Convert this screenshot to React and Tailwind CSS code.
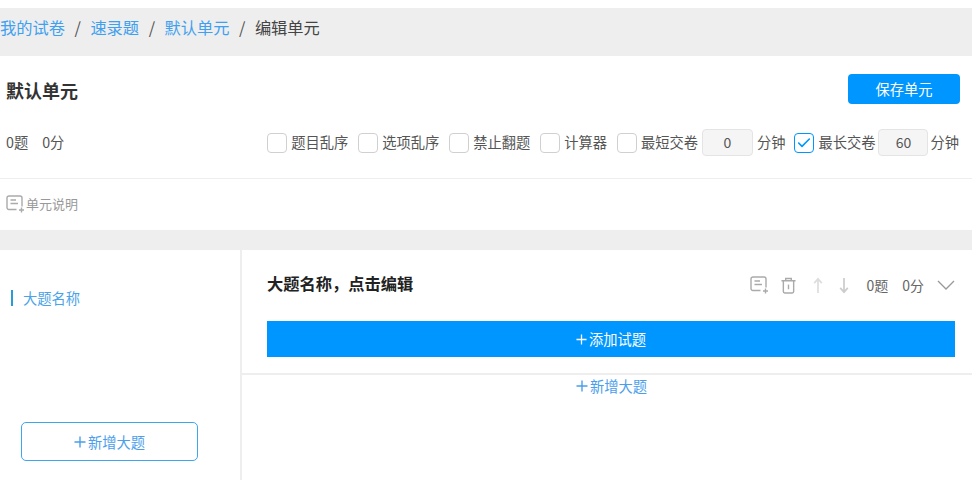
import React from "react";
import { Check } from "lucide-react";

const NoteIcon = ({ className }) => (
  <svg viewBox="0 0 18 18" fill="none" stroke="currentColor" strokeWidth="1.4" className={className}>
    <path d="M10.500 14.500H3a2 2 0 0 1-2-2V3a2 2 0 0 1 2-2h11a2 2 0 0 1 2 2v8.500" />
    <path d="M4.500 5h5.500M4.500 8.500h7.500" />
    <path d="M15.500 12.500v5M13 15h5" />
  </svg>
);

const TrashIcon = ({ className }) => (
  <svg viewBox="0 0 16 18" fill="none" stroke="currentColor" strokeWidth="1.5" className={className}>
    <path d="M0.500 4h15M5 4V1.500h6V4" />
    <path d="M2.500 4v11.500a1.500 1.500 0 0 0 1.500 1.500h8a1.500 1.500 0 0 0 1.500-1.500V4" />
    <path d="M8 8v5" />
  </svg>
);

const PlusIcon = ({ className }) => (
  <svg viewBox="0 0 12 12" fill="none" stroke="currentColor" strokeWidth="1.4" className={className}>
    <path d="M6 0.500v11M0.500 6h11" />
  </svg>
);

const ArrowIcon = ({ className, down }) => (
  <svg viewBox="0 0 12 18" fill="none" stroke="currentColor" strokeWidth="1.8" className={className}>
    {down ? <path d="M6 1v15M2 11.500l4 4.500 4-4.500" /> : <path d="M6 17V2M2 6.500L6 2l4 4.500" />}
  </svg>
);

const Chevron = ({ className }) => (
  <svg viewBox="0 0 18 10" fill="none" stroke="currentColor" strokeWidth="1.3" className={className}>
    <path d="M1 1l8 8 8-8" />
  </svg>
);

const CheckItem = ({ label, checked }) => (
  <label className="flex items-center gap-1">
    <span
      className={`flex h-5 w-5 items-center justify-center rounded-[4px] border bg-white ${
        checked ? "border-[#0096ff] text-[#0096ff]" : "border-[#d0d0d0]"
      }`}
    >
      {checked && <Check size={16} strokeWidth={2.4} />}
    </span>
    <span className="pb-[2px]">{label}</span>
  </label>
);

const MinuteInput = ({ value, className }) => (
  <div
    className={`flex h-[27px] items-center justify-center rounded-[4px] border border-[#e4e4e4] bg-[#f5f5f5] text-[14px] text-[#555] ${className}`}
  >
    {value}
  </div>
);

export default function App() {
  return (
    <div
      className="h-[484px] w-[972px] overflow-hidden bg-white pt-2 text-[#555]"
      style={{ fontFamily: '"Noto Sans CJK SC", "Liberation Sans", sans-serif' }}
    >
      {/* Breadcrumb */}
      <div className="flex h-12 items-center bg-[#eeeeee] pb-[10px] text-[16.25px] leading-none">
        <span className="text-[#3fa0f0]">我的试卷</span>
        <span className="mx-[9.5px] text-[#555]">/</span>
        <span className="text-[#3fa0f0]">速录题</span>
        <span className="mx-[9.5px] text-[#555]">/</span>
        <span className="text-[#3fa0f0]">默认单元</span>
        <span className="mx-[9.5px] text-[#555]">/</span>
        <span className="text-[#444]">编辑单元</span>
      </div>

      {/* Unit header */}
      <div className="flex h-[123px] flex-col border-b border-[#eeeeee]">
        <div className="flex h-[48px] items-end justify-between pl-[6px] pr-3">
          <h1 className="text-[18px] leading-[28px] font-bold text-[#333]">默认单元</h1>
          <button className="h-[30px] w-[112px] rounded-[4px] bg-[#0096ff] text-[14.25px] text-white">保存单元</button>
        </div>
        <div className="mt-[24px] flex items-center justify-between pl-[6px] pr-[13px] text-[14.25px] leading-[27px]">
          <div className="flex gap-[14px] pb-[2px]">
            <span>0题</span>
            <span>0分</span>
          </div>
          <div className="flex items-center gap-[10px]">
            <CheckItem label="题目乱序" />
            <CheckItem label="选项乱序" />
            <CheckItem label="禁止翻题" />
            <CheckItem label="计算器" />
            <div className="flex items-center gap-1">
              <CheckItem label="最短交卷" />
              <MinuteInput value="0" className="w-[51px]" />
              <span className="pb-[2px]">分钟</span>
            </div>
            <div className="-ml-px flex items-center gap-1">
              <CheckItem label="最长交卷" checked />
              <MinuteInput value="60" className="-ml-px w-[50px]" />
              <span className="-ml-[2px] pb-[2px]">分钟</span>
            </div>
          </div>
        </div>
      </div>

      {/* Unit note */}
      <div className="flex h-[51px] items-center gap-[2px] pb-[2px] pl-[6px] text-[13px] text-[#999]">
        <NoteIcon className="h-[18px] w-[18px] text-[#aaa]" />
        <span>单元说明</span>
      </div>

      <div className="h-5 bg-[#eeeeee]" />

      {/* Body */}
      <div className="flex h-[230px]">
        <aside className="flex w-[242px] shrink-0 flex-col justify-between border-r-2 border-[#eeeeee] pb-[19px] pl-[11px] pt-10">
          <div className="flex h-4 items-center border-l-2 border-[#2b9ad8] pl-[10px] text-[14.25px] text-[#4aa3e8]">大题名称</div>
          <button className="ml-[10px] flex h-[39px] w-[177px] items-center justify-center gap-[2px] rounded-[5px] border border-[#3ea6ee] text-[14.25px] text-[#4a9eec]">
            <PlusIcon className="h-3 w-3" />
            新增大题
          </button>
        </aside>

        <main className="flex-1">
          <div className="h-[125px] border-b-2 border-[#eeeeee] pl-[25px] pr-[17px]">
            <div className="flex h-[71px] items-center justify-between pb-1">
              <h2 className="text-[16.25px] font-bold text-[#222]">大题名称，点击编辑</h2>
              <div className="mt-[3px] flex items-center text-[14px] text-[#666]">
                <NoteIcon className="h-[18px] w-[18px] text-[#aaa]" />
                <TrashIcon className="ml-[13px] h-[17px] w-[15px] text-[#aaa]" />
                <ArrowIcon className="ml-[16px] h-[17px] w-3 text-[#ddd]" />
                <ArrowIcon down className="ml-[14px] h-[17px] w-3 text-[#ccc]" />
                <span className="ml-[16px]">0题</span>
                <span className="ml-[14px]">0分</span>
                <Chevron className="ml-[13px] h-[10px] w-[18px] text-[#999]" />
              </div>
            </div>
            <button className="flex h-9 w-full items-center justify-center gap-[2px] bg-[#0096ff] text-[14.25px] text-white">
              <PlusIcon className="h-[11px] w-[11px]" />
              添加试题
            </button>
          </div>
          <div className="flex items-center justify-center gap-[2px] pl-[9px] text-[14.25px] text-[#4a9eec]">
            <PlusIcon className="h-3 w-3" />
            新增大题
          </div>
        </main>
      </div>
    </div>
  );
}
